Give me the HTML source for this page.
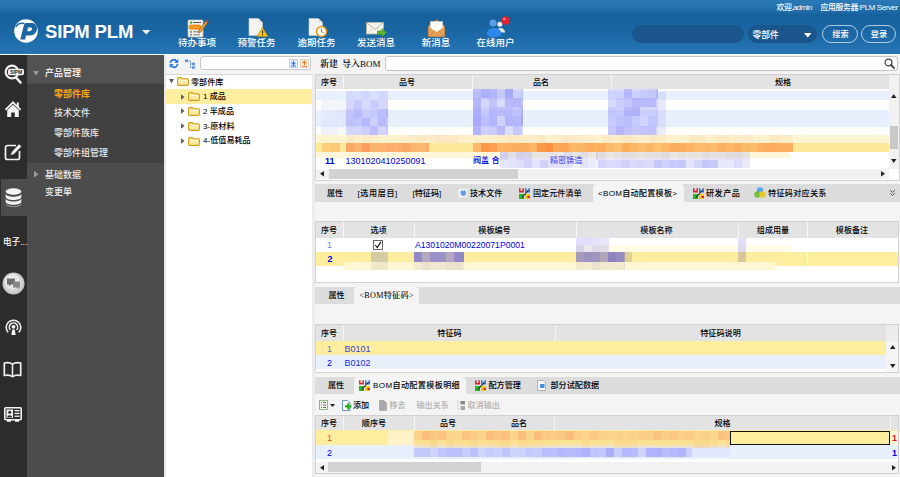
<!DOCTYPE html>
<html><head><meta charset="utf-8"><title>SIPM PLM</title>
<style>
*{margin:0;padding:0;box-sizing:border-box}
html,body{width:900px;height:477px;overflow:hidden;background:#f4f4f4;font-family:"Liberation Sans","Noto Sans CJK SC",sans-serif;font-size:9px;color:#000;font-weight:500}
.a{position:absolute}
.t{white-space:nowrap;line-height:10px;height:10px}
.w{color:#fff}
.b{color:#0000e0}
.g{color:#b2b2b2}
.s{font-family:"Liberation Serif","Noto Serif CJK SC",serif;font-weight:600}
svg{position:absolute;overflow:visible}
</style></head><body>
<div class="a" style="left:0px;top:0px;width:900px;height:53.5px;background:linear-gradient(#2b7ab7 0,#1e6aa6 12px,#16609c 15px,#1a66a3 30px,#2674b4 53px);"></div>
<div class="a" style="left:0px;top:53.5px;width:900px;height:2px;background:#fff;"></div>
<svg style="left:13.5px;top:18.6px" width="24" height="24" viewBox="0 0 24 24"><circle cx="12" cy="12" r="11.8" fill="#fff"/><path fill-rule="evenodd" d="M6.3 20.6L9.2 8.8C9.8 5.8 10.5 4.1 12.5 4.1H17.5C21.3 4.1 23.2 6.4 23 9.8C22.7 13.8 19.8 16.5 15.8 16.5H12L11 20.6ZM14 8.6L13.3 12.2H15.3C17 12.2 17.9 11.3 18 10.1C18.1 9.1 17.5 8.6 16.2 8.6Z" fill="#1c66a4"/><path d="M1.7 8C3.5 4.8 7 3.8 10.5 4.5" stroke="#1c66a4" stroke-width="1.4" fill="none"/></svg>
<div class="a t w" style="left:45px;top:21px;font-size:18.5px;line-height:21px;height:21px;font-weight:bold;letter-spacing:-0.15px">SIPM PLM</div>
<svg style="left:142px;top:30px" width="9" height="5"><path d="M0 0h8.5l-4.25 4.5z" fill="#e8f0f8"/></svg>
<div class="a t w" style="left:97px;width:200px;text-align:center;top:38px;font-size:9.5px">待办事项</div>
<div class="a t w" style="left:156.5px;width:200px;text-align:center;top:38px;font-size:9.5px">预警任务</div>
<div class="a t w" style="left:216.5px;width:200px;text-align:center;top:38px;font-size:9.5px">逾期任务</div>
<div class="a t w" style="left:276px;width:200px;text-align:center;top:38px;font-size:9.5px">发送消息</div>
<div class="a t w" style="left:336px;width:200px;text-align:center;top:38px;font-size:9.5px">新消息</div>
<div class="a t w" style="left:395.5px;width:200px;text-align:center;top:38px;font-size:9.5px">在线用户</div>
<svg style="left:187px;top:19px" width="22" height="19" viewBox="0 0 22 19">
<rect x="1" y="1" width="15" height="17" rx="1" fill="#f4f4ee" stroke="#c9c9c0" stroke-width=".6"/>
<rect x="2" y="6" width="12" height="4.2" rx="1.5" fill="#f59a23" stroke="#d9700a" stroke-width=".6"/>
<rect x="6" y="3" width="8" height="1" fill="#555"/><rect x="3" y="2.6" width="2" height="2" fill="#3a3"/>
<rect x="6" y="12.3" width="7" height="1" fill="#777"/><rect x="3" y="11.8" width="2" height="2" fill="#999"/>
<rect x="6" y="15.3" width="7" height="1" fill="#777"/><rect x="3" y="14.8" width="2" height="2" fill="#999"/>
<path d="M19.5 1.2l1.8 1.6-7.2 10-2.6 1.2.5-2.8z" fill="#e8a23a" stroke="#8a4b10" stroke-width=".6"/><path d="M19.5 1.2l1.8 1.6-1 1.4-1.8-1.6z" fill="#d23a2a"/>
</svg>
<svg style="left:248px;top:18px" width="21" height="20" viewBox="0 0 21 20">
<path d="M1 .5h9.5l4 4V17.5H1z" fill="#f3f3f0" stroke="#c4c4c0" stroke-width=".7"/><path d="M10.5 .5v4h4z" fill="#dcdcd8"/>
<path d="M14.5 9.5l5.5 9h-11z" fill="#f4c21c" stroke="#b98a00" stroke-width=".7"/><rect x="14" y="12.5" width="1.1" height="3" fill="#3a2a00"/><rect x="14" y="16.1" width="1.1" height="1.1" fill="#3a2a00"/>
</svg>
<svg style="left:308px;top:18px" width="20" height="20" viewBox="0 0 20 20">
<path d="M1 .5h9.5l4 4V17.5H1z" fill="#f3f3f0" stroke="#c4c4c0" stroke-width=".7"/><path d="M10.5 .5v4h4z" fill="#dcdcd8"/>
<circle cx="13.5" cy="13.5" r="5" fill="#fbfbf5" stroke="#e39a1c" stroke-width="1.5"/><path d="M13.5 10.5v3.2l2.2 1" stroke="#a06a10" stroke-width=".9" fill="none"/>
</svg>
<svg style="left:366px;top:22px" width="21" height="15" viewBox="0 0 21 15">
<rect x=".5" y=".5" width="17" height="11.5" fill="#f7f5ec" stroke="#b9b4a0" stroke-width=".8"/><path d="M.8 .8l8.2 6.5 8.2-6.5" stroke="#a9a48e" stroke-width=".8" fill="none"/><path d="M.8 11.8l6-5.2M17.2 11.8l-6-5.2" stroke="#cfcab8" stroke-width=".6"/>
<path d="M11.5 9h4.5V6.5l4.5 4.2-4.5 4.2V12.4h-4.5z" fill="#5cb531" stroke="#3a8a17" stroke-width=".6"/>
</svg>
<svg style="left:428px;top:19px" width="17" height="18" viewBox="0 0 17 18">
<path d="M.5 7L8.5 .8 16.5 7V17.5H.5z" fill="#e9a85c" stroke="#b87830" stroke-width=".7"/>
<rect x="2.3" y="2.5" width="12.4" height="10" fill="#fbfaf5" stroke="#d8d4c8" stroke-width=".5"/>
<path d="M.5 7.5l8 6 8-6V17.5H.5z" fill="#e3a057"/><path d="M.5 17.5l6.5-6M16.5 17.5l-6.5-6" stroke="#c88642" stroke-width=".6"/>
</svg>
<svg style="left:487px;top:16px" width="25" height="21" viewBox="0 0 25 21">
<circle cx="12.8" cy="8.3" r="2.5" fill="#f1ede4"/><path d="M9.5 16.5c0-3 1.5-4.5 4-4.5s4.5 1.5 4.5 4.5z" fill="#ece6da"/>
<circle cx="6" cy="7" r="3.5" fill="#5a9fe8"/><path d="M-.2 18c0-3.8 2.8-6 7.2-6s7.4 2.2 7.4 6c0 1.8-3 2.9-7.4 2.9S-.2 19.8 -.2 18z" fill="#2a88ee"/>
<circle cx="18.6" cy="4.5" r="4.3" fill="#e0222c"/><circle cx="17.3" cy="3" r="1.3" fill="#f9858a"/>
</svg>
<div class="a t w" style="left:776.5px;top:2.5px;font-size:7.9px;letter-spacing:-0.5px">欢迎,admin</div>
<div class="a t w" style="left:820.5px;top:2.5px;font-size:7.9px;letter-spacing:-0.38px">应用服务器:PLM Server</div>
<div class="a" style="left:632px;top:25px;width:112px;height:18px;background:#1a568c;border-radius:9px"></div>
<div class="a" style="left:748px;top:25px;width:69px;height:18px;background:#1a568c;border-radius:9px"></div>
<div class="a t w" style="left:752.5px;top:29.5px;font-size:8.8px">零部件</div>
<svg style="left:804px;top:33px" width="8" height="5"><path d="M0 0h7.5l-3.75 4.5z" fill="#fff"/></svg>
<div class="a" style="left:822px;top:25px;width:36px;height:18px;background:transparent;border:1px solid rgba(255,255,255,.65);border-radius:9px"></div>
<div class="a" style="left:861px;top:25px;width:35px;height:18px;background:transparent;border:1px solid rgba(255,255,255,.65);border-radius:9px"></div>
<div class="a t w" style="left:740.5px;width:200px;text-align:center;top:29.5px;font-size:8.2px">搜索</div>
<div class="a t w" style="left:779px;width:200px;text-align:center;top:29.5px;font-size:8.2px">登录</div>
<div class="a" style="left:0px;top:55.2px;width:27.3px;height:422px;background:#2c2c2c;"></div>
<div class="a" style="left:27.3px;top:55.2px;width:136.7px;height:422px;background:#4c4c4c;"></div>
<div class="a" style="left:27.3px;top:55.2px;width:136.7px;height:28.3px;background:#525252;"></div>
<div class="a" style="left:27.3px;top:83.5px;width:136.7px;height:79.5px;background:#414141;"></div>
<div class="a" style="left:164px;top:55.2px;width:1.5px;height:422px;background:#e8e8e8;"></div>
<div class="a" style="left:1px;top:179px;width:26px;height:37px;background:#4c4c4c;"></div>
<svg style="left:33px;top:71px" width="6" height="5"><path d="M0 0h6l-3 4.5z" fill="#9a9a9a"/></svg>
<div class="a t w" style="left:45px;top:68px;font-size:9px">产品管理</div>
<div class="a t " style="left:54px;top:88.5px;font-size:9px;font-weight:bold;color:#f9a51a">零部件库</div>
<div class="a t w" style="left:54px;top:108px;font-size:9px;color:#e8e8e8">技术文件</div>
<div class="a t w" style="left:54px;top:127.5px;font-size:9px;color:#e8e8e8">零部件族库</div>
<div class="a t w" style="left:54px;top:147.5px;font-size:9px;color:#e8e8e8">零部件组管理</div>
<svg style="left:34px;top:171px" width="5" height="7"><path d="M0 0v6.5l4.5-3.25z" fill="#9a9a9a"/></svg>
<div class="a t w" style="left:45px;top:169.5px;font-size:9px;color:#e8e8e8">基础数据</div>
<div class="a t w" style="left:45px;top:186.5px;font-size:9px;color:#e8e8e8">变更单</div>
<svg style="left:3px;top:64px" width="22" height="19" viewBox="0 0 22 19">
<circle cx="9" cy="8" r="6.3" fill="none" stroke="#f2f2f2" stroke-width="2.2"/><path d="M13 13.5l4.5 5" stroke="#f2f2f2" stroke-width="2.6" stroke-linecap="round"/>
<rect x="5" y="4.8" width="16" height="6.4" rx="2" fill="#f2f2f2"/><text x="13" y="10" font-size="5" font-weight="bold" text-anchor="middle" fill="#2c2c2c" font-family="Liberation Sans,sans-serif">SIPM</text></svg>
<svg style="left:4px;top:100px" width="18" height="18" viewBox="0 0 18 18">
<path d="M9 1L.8 9.2l1.3 1.3L9 3.8l6.9 6.7 1.3-1.3L14.8 6.8V2.5h-2v2.4z" fill="#f2f2f2"/><path d="M3.2 10.3L9 4.8l5.8 5.5V17h-4v-4.5H7.2V17h-4z" fill="#f2f2f2"/></svg>
<svg style="left:4px;top:143px" width="19" height="18" viewBox="0 0 19 18">
<path d="M12 2.5H3.5a2 2 0 0 0-2 2v10a2 2 0 0 0 2 2h10a2 2 0 0 0 2-2V8" fill="none" stroke="#f2f2f2" stroke-width="1.7"/>
<path d="M15 1l2.5 2.5-7.5 7.8-3.6 1.3 1.2-3.7z" fill="#f2f2f2" stroke="#2c2c2c" stroke-width=".5"/></svg>
<svg style="left:5px;top:188px" width="17" height="19" viewBox="0 0 17 19">
<ellipse cx="8.5" cy="3.5" rx="7.8" ry="3.3" fill="#f4f4f4"/>
<path d="M.7 5.5c0 4.4 15.6 4.4 15.6 0v3.2c0 4.4-15.6 4.4-15.6 0z" fill="#f4f4f4"/>
<path d="M.7 10.3c0 4.4 15.6 4.4 15.6 0v3.2c0 4.4-15.6 4.4-15.6 0z" fill="#f4f4f4"/>
<path d="M.7 15.1c0 4.4 15.6 4.4 15.6 0v.4c0 4.4-15.6 4.4-15.6 0z" fill="#f4f4f4"/></svg>
<div class="a t w" style="left:3px;top:236.5px;font-size:8.6px">电子...</div>
<svg style="left:2px;top:272px" width="23" height="23" viewBox="0 0 23 23">
<circle cx="11.5" cy="11.5" r="11" fill="#c4c4c4"/><circle cx="11" cy="10.8" r="9.5" fill="#d6d6d6"/><circle cx="10.5" cy="9.8" r="7.5" fill="#e6e6e6"/><circle cx="10" cy="9" r="5" fill="#f0f0f0"/>
<path d="M5 6.5h8v6H9l-2 2v-2H5z" fill="#6e6e6e"/><path d="M11 9.5h7v6h-1.5v2l-2-2H11z" fill="#888"/></svg>
<svg style="left:5px;top:318px" width="17" height="18" viewBox="0 0 17 18">
<path d="M3.2 14.5A7.3 7.3 0 1 1 13.8 14.5" fill="none" stroke="#f2f2f2" stroke-width="1.6"/>
<path d="M5.4 12A4.2 4.2 0 1 1 11.6 12" fill="none" stroke="#f2f2f2" stroke-width="1.5"/>
<circle cx="8.5" cy="8.8" r="1.9" fill="#f2f2f2"/><path d="M6.3 17l1-5.5h2.4l1 5.5z" fill="#f2f2f2"/></svg>
<svg style="left:3px;top:361px" width="19" height="18" viewBox="0 0 19 18">
<path d="M9.5 3.2C7.5 1.6 4 1.3 1.3 2v12.5c2.7-.7 6.2-.4 8.2 1.2 2-1.6 5.5-1.9 8.2-1.2V2c-2.7-.7-6.2-.4-8.2 1.2z" fill="none" stroke="#f2f2f2" stroke-width="1.7" stroke-linejoin="round"/><path d="M9.5 3.2v12.5" stroke="#f2f2f2" stroke-width="1.5"/></svg>
<svg style="left:4px;top:407px" width="18" height="15" viewBox="0 0 18 15">
<rect x=".8" y=".8" width="16.4" height="12" rx="1" fill="none" stroke="#f2f2f2" stroke-width="1.6"/>
<rect x="2.5" y="2.5" width="6.5" height="8.5" fill="#f2f2f2"/><circle cx="5.7" cy="5.3" r="1.5" fill="#2c2c2c"/><path d="M3.3 10.5c0-3 4.8-3 4.8 0z" fill="#2c2c2c"/>
<rect x="10.5" y="3" width="5" height="1.3" fill="#f2f2f2"/><rect x="10.5" y="5.8" width="5" height="1.3" fill="#f2f2f2"/><rect x="10.5" y="8.6" width="5" height="1.3" fill="#f2f2f2"/>
<rect x="3" y="13" width="4" height="1.8" fill="#f2f2f2"/><rect x="11" y="13" width="4" height="1.8" fill="#f2f2f2"/></svg>
<div class="a" style="left:165.5px;top:55.2px;width:147px;height:18.5px;background:#f3f3f3;"></div>
<div class="a" style="left:165.5px;top:73.5px;width:146.5px;height:404px;background:#fff;border-top:1px solid #d8d8d8"></div>
<div class="a" style="left:312px;top:73.5px;width:3px;height:404px;background:#ececec;"></div>
<svg style="left:168px;top:58px" width="12" height="11" viewBox="0 0 12 11">
<path d="M1.5 5A4.3 4.3 0 0 1 9 2.3L10.3 1v4H6.3l1.5-1.5A2.6 2.6 0 0 0 3.3 5z" fill="#2f7ddb"/>
<path d="M10.5 6A4.3 4.3 0 0 1 3 8.7L1.7 10V6h4L4.2 7.5A2.6 2.6 0 0 0 8.7 6z" fill="#2f7ddb"/></svg>
<svg style="left:185px;top:59px" width="10" height="10" viewBox="0 0 10 10">
<path d="M3 2h2.5v6.5H8M5.5 5H8" stroke="#7aa0d0" stroke-width=".8" fill="none"/><rect x="0" y=".5" width="3" height="2.6" fill="#6b95d0"/><rect x="7" y="3.7" width="3" height="2.6" fill="#6b95d0"/><rect x="7" y="7.2" width="3" height="2.6" fill="#6b95d0"/></svg>
<div class="a" style="left:199.5px;top:56px;width:111.5px;height:14px;background:#fff;border:1px solid #c4c4c4;border-radius:3px"></div>
<svg style="left:289px;top:59px" width="9" height="9" viewBox="0 0 9 9"><rect x=".4" y=".4" width="8.2" height="8.2" fill="#eaf1fa" stroke="#9db4d0" stroke-width=".6"/><path d="M4.5 1.5v3.5M2.5 3.5l2 2.2 2-2.2M2 7h5" stroke="#2f7ddb" stroke-width="1.1" fill="none"/></svg>
<svg style="left:300px;top:59px" width="9" height="9" viewBox="0 0 9 9"><rect x=".4" y=".4" width="8.2" height="8.2" fill="#fbf1e6" stroke="#d0b89d" stroke-width=".6"/><path d="M4.5 6V2.5M2.5 4.2l2-2.2 2 2.2M2 7.2h5" stroke="#ee7a10" stroke-width="1.1" fill="none"/></svg>
<div class="a" style="left:165.5px;top:89px;width:146.5px;height:15px;background:#fdee9f;"></div>
<svg style="left:169px;top:79px" width="6" height="6"><path d="M0 0h5l-2.5 4.5z" fill="#606060"/></svg>
<svg style="left:177px;top:77.2px" width="12" height="9" viewBox="0 0 12 9"><path d="M.6 1.8C.6 1 1 .6 1.8 .6h2.5l1.2 1.2h4.7c.8 0 1.2.4 1.2 1.2v4.2c0 .8-.4 1.2-1.2 1.2H1.8C1 8.4 .6 8 .6 7.2z" fill="#fbe9a0" stroke="#cf9c18" stroke-width="1.1"/><path d="M1.6 3.6h8.8" stroke="#fff8d8" stroke-width="1"/></svg>
<div class="a t " style="left:191px;top:77.5px;font-size:8.1px">零部件库</div>
<svg style="left:180.5px;top:93.6px" width="5" height="7"><path d="M0 .3v5.4l3.6-2.7z" fill="#606060"/></svg>
<svg style="left:188px;top:92.2px" width="12" height="9" viewBox="0 0 12 9"><path d="M.6 1.8C.6 1 1 .6 1.8 .6h2.5l1.2 1.2h4.7c.8 0 1.2.4 1.2 1.2v4.2c0 .8-.4 1.2-1.2 1.2H1.8C1 8.4 .6 8 .6 7.2z" fill="#fbe9a0" stroke="#cf9c18" stroke-width="1.1"/><path d="M1.6 3.6h8.8" stroke="#fff8d8" stroke-width="1"/></svg>
<div class="a t " style="left:203px;top:92px;font-size:8.1px">1 成品</div>
<svg style="left:180.5px;top:108.4px" width="5" height="7"><path d="M0 .3v5.4l3.6-2.7z" fill="#606060"/></svg>
<svg style="left:188px;top:107px" width="12" height="9" viewBox="0 0 12 9"><path d="M.6 1.8C.6 1 1 .6 1.8 .6h2.5l1.2 1.2h4.7c.8 0 1.2.4 1.2 1.2v4.2c0 .8-.4 1.2-1.2 1.2H1.8C1 8.4 .6 8 .6 7.2z" fill="#fbe9a0" stroke="#cf9c18" stroke-width="1.1"/><path d="M1.6 3.6h8.8" stroke="#fff8d8" stroke-width="1"/></svg>
<div class="a t " style="left:203px;top:106.8px;font-size:8.1px">2 半成品</div>
<svg style="left:180.5px;top:123.2px" width="5" height="7"><path d="M0 .3v5.4l3.6-2.7z" fill="#606060"/></svg>
<svg style="left:188px;top:121.8px" width="12" height="9" viewBox="0 0 12 9"><path d="M.6 1.8C.6 1 1 .6 1.8 .6h2.5l1.2 1.2h4.7c.8 0 1.2.4 1.2 1.2v4.2c0 .8-.4 1.2-1.2 1.2H1.8C1 8.4 .6 8 .6 7.2z" fill="#fbe9a0" stroke="#cf9c18" stroke-width="1.1"/><path d="M1.6 3.6h8.8" stroke="#fff8d8" stroke-width="1"/></svg>
<div class="a t " style="left:203px;top:121.6px;font-size:8.1px">3-原材料</div>
<svg style="left:180.5px;top:138px" width="5" height="7"><path d="M0 .3v5.4l3.6-2.7z" fill="#606060"/></svg>
<svg style="left:188px;top:136.6px" width="12" height="9" viewBox="0 0 12 9"><path d="M.6 1.8C.6 1 1 .6 1.8 .6h2.5l1.2 1.2h4.7c.8 0 1.2.4 1.2 1.2v4.2c0 .8-.4 1.2-1.2 1.2H1.8C1 8.4 .6 8 .6 7.2z" fill="#fbe9a0" stroke="#cf9c18" stroke-width="1.1"/><path d="M1.6 3.6h8.8" stroke="#fff8d8" stroke-width="1"/></svg>
<div class="a t " style="left:203px;top:136.4px;font-size:8.1px">4-低值易耗品</div>
<div class="a" style="left:315px;top:55.2px;width:585px;height:18.5px;background:#f3f3f3;"></div>
<div class="a t s" style="left:320px;top:59px;font-size:9px">新建</div>
<div class="a t s" style="left:342px;top:59px;font-size:9px">导入<span style="font-weight:400">BOM</span></div>
<div class="a" style="left:384.5px;top:56px;width:513px;height:14.5px;background:#fff;border:1px solid #c4c4c4;border-radius:3px"></div>
<svg style="left:884px;top:58px" width="11" height="11" viewBox="0 0 11 11"><circle cx="4.5" cy="4.5" r="3.4" fill="none" stroke="#444" stroke-width="1.3"/><path d="M7 7l3 3" stroke="#444" stroke-width="1.8" stroke-linecap="round"/></svg>
<div class="a" style="left:314.5px;top:73.5px;width:585px;height:107px;background:#fff;border:1px solid #d2d2d2"></div>
<div class="a" style="left:315.5px;top:74.5px;width:573.5px;height:14.5px;background:#e3e3e3;"></div>
<div class="a" style="left:343px;top:74.5px;width:1px;height:14.5px;background:#f6f6f6;"></div>
<div class="a" style="left:472px;top:74.5px;width:1px;height:14.5px;background:#f6f6f6;"></div>
<div class="a" style="left:611px;top:74.5px;width:1px;height:14.5px;background:#f6f6f6;"></div>
<div class="a t " style="left:229px;width:200px;text-align:center;top:77.5px;font-size:8.1px">序号</div>
<div class="a t " style="left:307px;width:200px;text-align:center;top:77.5px;font-size:8.1px">品号</div>
<div class="a t " style="left:441px;width:200px;text-align:center;top:77.5px;font-size:8.1px">品名</div>
<div class="a t " style="left:683px;width:200px;text-align:center;top:77.5px;font-size:8.1px">规格</div>
<div class="a" style="left:315.5px;top:91px;width:573.5px;height:9px;background:#e8f0fd;"></div>
<div class="a" style="left:315.5px;top:110px;width:573.5px;height:17px;background:#e8f0fd;"></div>
<div class="a" style="left:315.5px;top:135px;width:573.5px;height:8px;background:#fdf4d2;"></div>
<div class="a" style="left:315.5px;top:143px;width:573.5px;height:9px;background:#fde99a;"></div>
<div class="a" style="left:315.5px;top:152px;width:474.5px;height:6px;background:#fff7dc;"></div>
<div class="a" style="left:345.5px;top:91px;width:8px;height:9px;background:rgba(170,170,250,0.31)"></div>
<div class="a" style="left:353.5px;top:91px;width:8px;height:9px;background:rgba(170,170,250,0.28)"></div>
<div class="a" style="left:361.5px;top:91px;width:8px;height:9px;background:rgba(170,170,250,0.38)"></div>
<div class="a" style="left:369.5px;top:91px;width:8px;height:9px;background:rgba(170,170,250,0.26)"></div>
<div class="a" style="left:377.5px;top:91px;width:8px;height:9px;background:rgba(170,170,250,0.36)"></div>
<div class="a" style="left:385.5px;top:91px;width:2px;height:9px;background:rgba(170,170,250,0.32)"></div>
<div class="a" style="left:345.5px;top:100px;width:8px;height:8.8px;background:rgba(170,170,250,0.47)"></div>
<div class="a" style="left:353.5px;top:100px;width:8px;height:8.8px;background:rgba(170,170,250,0.65)"></div>
<div class="a" style="left:361.5px;top:100px;width:8px;height:8.8px;background:rgba(170,170,250,0.46)"></div>
<div class="a" style="left:369.5px;top:100px;width:8px;height:8.8px;background:rgba(170,170,250,0.62)"></div>
<div class="a" style="left:377.5px;top:100px;width:8px;height:8.8px;background:rgba(170,170,250,0.48)"></div>
<div class="a" style="left:385.5px;top:100px;width:2px;height:8.8px;background:rgba(170,170,250,0.49)"></div>
<div class="a" style="left:345.5px;top:108.8px;width:8px;height:8.8px;background:rgba(170,170,250,0.62)"></div>
<div class="a" style="left:353.5px;top:108.8px;width:8px;height:8.8px;background:rgba(170,170,250,0.78)"></div>
<div class="a" style="left:361.5px;top:108.8px;width:8px;height:8.8px;background:rgba(170,170,250,0.5)"></div>
<div class="a" style="left:369.5px;top:108.8px;width:8px;height:8.8px;background:rgba(170,170,250,0.54)"></div>
<div class="a" style="left:377.5px;top:108.8px;width:8px;height:8.8px;background:rgba(170,170,250,0.7)"></div>
<div class="a" style="left:385.5px;top:108.8px;width:2px;height:8.8px;background:rgba(170,170,250,0.83)"></div>
<div class="a" style="left:345.5px;top:117.5px;width:8px;height:8.8px;background:rgba(170,170,250,0.68)"></div>
<div class="a" style="left:353.5px;top:117.5px;width:8px;height:8.8px;background:rgba(170,170,250,0.61)"></div>
<div class="a" style="left:361.5px;top:117.5px;width:8px;height:8.8px;background:rgba(170,170,250,0.84)"></div>
<div class="a" style="left:369.5px;top:117.5px;width:8px;height:8.8px;background:rgba(170,170,250,0.47)"></div>
<div class="a" style="left:377.5px;top:117.5px;width:8px;height:8.8px;background:rgba(170,170,250,0.79)"></div>
<div class="a" style="left:385.5px;top:117.5px;width:2px;height:8.8px;background:rgba(170,170,250,0.57)"></div>
<div class="a" style="left:345.5px;top:126.2px;width:8px;height:8.8px;background:rgba(170,170,250,0.51)"></div>
<div class="a" style="left:353.5px;top:126.2px;width:8px;height:8.8px;background:rgba(170,170,250,0.5)"></div>
<div class="a" style="left:361.5px;top:126.2px;width:8px;height:8.8px;background:rgba(170,170,250,0.57)"></div>
<div class="a" style="left:369.5px;top:126.2px;width:8px;height:8.8px;background:rgba(170,170,250,0.78)"></div>
<div class="a" style="left:377.5px;top:126.2px;width:8px;height:8.8px;background:rgba(170,170,250,0.52)"></div>
<div class="a" style="left:385.5px;top:126.2px;width:2px;height:8.8px;background:rgba(170,170,250,0.68)"></div>
<div class="a" style="left:321px;top:100px;width:8px;height:8.8px;background:rgba(200,200,250,0.23)"></div>
<div class="a" style="left:329px;top:100px;width:8px;height:8.8px;background:rgba(200,200,250,0.17)"></div>
<div class="a" style="left:337px;top:100px;width:8px;height:8.8px;background:rgba(200,200,250,0.21)"></div>
<div class="a" style="left:345px;top:100px;width:0.5px;height:8.8px;background:rgba(200,200,250,0.11)"></div>
<div class="a" style="left:321px;top:108.8px;width:8px;height:8.8px;background:rgba(200,200,250,0.11)"></div>
<div class="a" style="left:329px;top:108.8px;width:8px;height:8.8px;background:rgba(200,200,250,0.14)"></div>
<div class="a" style="left:337px;top:108.8px;width:8px;height:8.8px;background:rgba(200,200,250,0.24)"></div>
<div class="a" style="left:345px;top:108.8px;width:0.5px;height:8.8px;background:rgba(200,200,250,0.19)"></div>
<div class="a" style="left:321px;top:117.5px;width:8px;height:8.8px;background:rgba(200,200,250,0.16)"></div>
<div class="a" style="left:329px;top:117.5px;width:8px;height:8.8px;background:rgba(200,200,250,0.22)"></div>
<div class="a" style="left:337px;top:117.5px;width:8px;height:8.8px;background:rgba(200,200,250,0.19)"></div>
<div class="a" style="left:345px;top:117.5px;width:0.5px;height:8.8px;background:rgba(200,200,250,0.16)"></div>
<div class="a" style="left:321px;top:126.2px;width:8px;height:8.8px;background:rgba(200,200,250,0.26)"></div>
<div class="a" style="left:329px;top:126.2px;width:8px;height:8.8px;background:rgba(200,200,250,0.24)"></div>
<div class="a" style="left:337px;top:126.2px;width:8px;height:8.8px;background:rgba(200,200,250,0.15)"></div>
<div class="a" style="left:345px;top:126.2px;width:0.5px;height:8.8px;background:rgba(200,200,250,0.21)"></div>
<div class="a" style="left:473px;top:88.5px;width:8px;height:9.3px;background:rgba(160,160,250,0.64)"></div>
<div class="a" style="left:481px;top:88.5px;width:8px;height:9.3px;background:rgba(160,160,250,0.83)"></div>
<div class="a" style="left:489px;top:88.5px;width:8px;height:9.3px;background:rgba(160,160,250,0.75)"></div>
<div class="a" style="left:497px;top:88.5px;width:8px;height:9.3px;background:rgba(160,160,250,0.51)"></div>
<div class="a" style="left:505px;top:88.5px;width:8px;height:9.3px;background:rgba(160,160,250,0.89)"></div>
<div class="a" style="left:513px;top:88.5px;width:8px;height:9.3px;background:rgba(160,160,250,0.41)"></div>
<div class="a" style="left:521px;top:88.5px;width:2px;height:9.3px;background:rgba(160,160,250,0.58)"></div>
<div class="a" style="left:473px;top:97.8px;width:8px;height:9.3px;background:rgba(160,160,250,0.77)"></div>
<div class="a" style="left:481px;top:97.8px;width:8px;height:9.3px;background:rgba(160,160,250,0.43)"></div>
<div class="a" style="left:489px;top:97.8px;width:8px;height:9.3px;background:rgba(160,160,250,0.62)"></div>
<div class="a" style="left:497px;top:97.8px;width:8px;height:9.3px;background:rgba(160,160,250,0.37)"></div>
<div class="a" style="left:505px;top:97.8px;width:8px;height:9.3px;background:rgba(160,160,250,0.72)"></div>
<div class="a" style="left:513px;top:97.8px;width:8px;height:9.3px;background:rgba(160,160,250,0.77)"></div>
<div class="a" style="left:521px;top:97.8px;width:2px;height:9.3px;background:rgba(160,160,250,0.67)"></div>
<div class="a" style="left:473px;top:107.1px;width:8px;height:9.3px;background:rgba(160,160,250,0.83)"></div>
<div class="a" style="left:481px;top:107.1px;width:8px;height:9.3px;background:rgba(160,160,250,0.52)"></div>
<div class="a" style="left:489px;top:107.1px;width:8px;height:9.3px;background:rgba(160,160,250,0.73)"></div>
<div class="a" style="left:497px;top:107.1px;width:8px;height:9.3px;background:rgba(160,160,250,0.68)"></div>
<div class="a" style="left:505px;top:107.1px;width:8px;height:9.3px;background:rgba(160,160,250,0.67)"></div>
<div class="a" style="left:513px;top:107.1px;width:8px;height:9.3px;background:rgba(160,160,250,0.6)"></div>
<div class="a" style="left:521px;top:107.1px;width:2px;height:9.3px;background:rgba(160,160,250,0.81)"></div>
<div class="a" style="left:473px;top:116.4px;width:8px;height:9.3px;background:rgba(160,160,250,0.87)"></div>
<div class="a" style="left:481px;top:116.4px;width:8px;height:9.3px;background:rgba(160,160,250,0.61)"></div>
<div class="a" style="left:489px;top:116.4px;width:8px;height:9.3px;background:rgba(160,160,250,0.72)"></div>
<div class="a" style="left:497px;top:116.4px;width:8px;height:9.3px;background:rgba(160,160,250,0.38)"></div>
<div class="a" style="left:505px;top:116.4px;width:8px;height:9.3px;background:rgba(160,160,250,0.74)"></div>
<div class="a" style="left:513px;top:116.4px;width:8px;height:9.3px;background:rgba(160,160,250,0.71)"></div>
<div class="a" style="left:521px;top:116.4px;width:2px;height:9.3px;background:rgba(160,160,250,0.9)"></div>
<div class="a" style="left:473px;top:125.7px;width:8px;height:9.3px;background:rgba(160,160,250,0.8)"></div>
<div class="a" style="left:481px;top:125.7px;width:8px;height:9.3px;background:rgba(160,160,250,0.51)"></div>
<div class="a" style="left:489px;top:125.7px;width:8px;height:9.3px;background:rgba(160,160,250,0.56)"></div>
<div class="a" style="left:497px;top:125.7px;width:8px;height:9.3px;background:rgba(160,160,250,0.72)"></div>
<div class="a" style="left:505px;top:125.7px;width:8px;height:9.3px;background:rgba(160,160,250,0.36)"></div>
<div class="a" style="left:513px;top:125.7px;width:8px;height:9.3px;background:rgba(160,160,250,0.6)"></div>
<div class="a" style="left:521px;top:125.7px;width:2px;height:9.3px;background:rgba(160,160,250,0.44)"></div>
<div class="a" style="left:608px;top:88.5px;width:8px;height:9.3px;background:rgba(160,160,250,0.4)"></div>
<div class="a" style="left:616px;top:88.5px;width:8px;height:9.3px;background:rgba(160,160,250,0.38)"></div>
<div class="a" style="left:624px;top:88.5px;width:8px;height:9.3px;background:rgba(160,160,250,0.7)"></div>
<div class="a" style="left:632px;top:88.5px;width:8px;height:9.3px;background:rgba(160,160,250,0.41)"></div>
<div class="a" style="left:640px;top:88.5px;width:8px;height:9.3px;background:rgba(160,160,250,0.46)"></div>
<div class="a" style="left:648px;top:88.5px;width:8px;height:9.3px;background:rgba(160,160,250,0.53)"></div>
<div class="a" style="left:656px;top:88.5px;width:2px;height:9.3px;background:rgba(160,160,250,0.74)"></div>
<div class="a" style="left:608px;top:97.8px;width:8px;height:9.3px;background:rgba(160,160,250,0.39)"></div>
<div class="a" style="left:616px;top:97.8px;width:8px;height:9.3px;background:rgba(160,160,250,0.55)"></div>
<div class="a" style="left:624px;top:97.8px;width:8px;height:9.3px;background:rgba(160,160,250,0.6)"></div>
<div class="a" style="left:632px;top:97.8px;width:8px;height:9.3px;background:rgba(160,160,250,0.75)"></div>
<div class="a" style="left:640px;top:97.8px;width:8px;height:9.3px;background:rgba(160,160,250,0.72)"></div>
<div class="a" style="left:648px;top:97.8px;width:8px;height:9.3px;background:rgba(160,160,250,0.74)"></div>
<div class="a" style="left:656px;top:97.8px;width:2px;height:9.3px;background:rgba(160,160,250,0.48)"></div>
<div class="a" style="left:608px;top:107.1px;width:8px;height:9.3px;background:rgba(160,160,250,0.54)"></div>
<div class="a" style="left:616px;top:107.1px;width:8px;height:9.3px;background:rgba(160,160,250,0.51)"></div>
<div class="a" style="left:624px;top:107.1px;width:8px;height:9.3px;background:rgba(160,160,250,0.75)"></div>
<div class="a" style="left:632px;top:107.1px;width:8px;height:9.3px;background:rgba(160,160,250,0.78)"></div>
<div class="a" style="left:640px;top:107.1px;width:8px;height:9.3px;background:rgba(160,160,250,0.42)"></div>
<div class="a" style="left:648px;top:107.1px;width:8px;height:9.3px;background:rgba(160,160,250,0.43)"></div>
<div class="a" style="left:656px;top:107.1px;width:2px;height:9.3px;background:rgba(160,160,250,0.45)"></div>
<div class="a" style="left:608px;top:116.4px;width:8px;height:9.3px;background:rgba(160,160,250,0.46)"></div>
<div class="a" style="left:616px;top:116.4px;width:8px;height:9.3px;background:rgba(160,160,250,0.57)"></div>
<div class="a" style="left:624px;top:116.4px;width:8px;height:9.3px;background:rgba(160,160,250,0.62)"></div>
<div class="a" style="left:632px;top:116.4px;width:8px;height:9.3px;background:rgba(160,160,250,0.47)"></div>
<div class="a" style="left:640px;top:116.4px;width:8px;height:9.3px;background:rgba(160,160,250,0.35)"></div>
<div class="a" style="left:648px;top:116.4px;width:8px;height:9.3px;background:rgba(160,160,250,0.54)"></div>
<div class="a" style="left:656px;top:116.4px;width:2px;height:9.3px;background:rgba(160,160,250,0.52)"></div>
<div class="a" style="left:608px;top:125.7px;width:8px;height:9.3px;background:rgba(160,160,250,0.6)"></div>
<div class="a" style="left:616px;top:125.7px;width:8px;height:9.3px;background:rgba(160,160,250,0.78)"></div>
<div class="a" style="left:624px;top:125.7px;width:8px;height:9.3px;background:rgba(160,160,250,0.66)"></div>
<div class="a" style="left:632px;top:125.7px;width:8px;height:9.3px;background:rgba(160,160,250,0.58)"></div>
<div class="a" style="left:640px;top:125.7px;width:8px;height:9.3px;background:rgba(160,160,250,0.63)"></div>
<div class="a" style="left:648px;top:125.7px;width:8px;height:9.3px;background:rgba(160,160,250,0.65)"></div>
<div class="a" style="left:656px;top:125.7px;width:2px;height:9.3px;background:rgba(160,160,250,0.37)"></div>
<div class="a" style="left:658px;top:91.5px;width:8px;height:9.3px;background:rgba(190,190,250,0.38)"></div>
<div class="a" style="left:658px;top:100.8px;width:8px;height:9.3px;background:rgba(190,190,250,0.36)"></div>
<div class="a" style="left:658px;top:110.1px;width:8px;height:9.3px;background:rgba(190,190,250,0.37)"></div>
<div class="a" style="left:658px;top:119.4px;width:8px;height:9.3px;background:rgba(190,190,250,0.36)"></div>
<div class="a" style="left:658px;top:128.7px;width:8px;height:6.3px;background:rgba(190,190,250,0.28)"></div>
<div class="a" style="left:345.5px;top:143px;width:8px;height:9px;background:rgba(250,140,80,0.71)"></div>
<div class="a" style="left:353.5px;top:143px;width:8px;height:9px;background:rgba(250,140,80,0.59)"></div>
<div class="a" style="left:361.5px;top:143px;width:8px;height:9px;background:rgba(250,140,80,0.8)"></div>
<div class="a" style="left:369.5px;top:143px;width:8px;height:9px;background:rgba(250,140,80,0.57)"></div>
<div class="a" style="left:377.5px;top:143px;width:8px;height:9px;background:rgba(250,140,80,0.58)"></div>
<div class="a" style="left:385.5px;top:143px;width:8px;height:9px;background:rgba(250,140,80,0.63)"></div>
<div class="a" style="left:393.5px;top:143px;width:8px;height:9px;background:rgba(250,140,80,0.61)"></div>
<div class="a" style="left:401.5px;top:143px;width:8px;height:9px;background:rgba(250,140,80,0.69)"></div>
<div class="a" style="left:409.5px;top:143px;width:8px;height:9px;background:rgba(250,140,80,0.57)"></div>
<div class="a" style="left:417.5px;top:143px;width:8px;height:9px;background:rgba(250,140,80,0.55)"></div>
<div class="a" style="left:425.5px;top:143px;width:3.5px;height:9px;background:rgba(250,140,80,0.61)"></div>
<div class="a" style="left:322px;top:143px;width:9px;height:9px;background:rgba(250,160,80,0.38)"></div>
<div class="a" style="left:331px;top:143px;width:9px;height:9px;background:rgba(250,160,80,0.44)"></div>
<div class="a" style="left:473px;top:143px;width:8px;height:9px;background:rgba(250,140,60,0.51)"></div>
<div class="a" style="left:481px;top:143px;width:8px;height:9px;background:rgba(250,140,60,0.89)"></div>
<div class="a" style="left:489px;top:143px;width:8px;height:9px;background:rgba(250,140,60,0.78)"></div>
<div class="a" style="left:497px;top:143px;width:8px;height:9px;background:rgba(250,140,60,0.57)"></div>
<div class="a" style="left:505px;top:143px;width:8px;height:9px;background:rgba(250,140,60,0.61)"></div>
<div class="a" style="left:513px;top:143px;width:8px;height:9px;background:rgba(250,140,60,0.66)"></div>
<div class="a" style="left:521px;top:143px;width:8px;height:9px;background:rgba(250,140,60,0.66)"></div>
<div class="a" style="left:529px;top:143px;width:8px;height:9px;background:rgba(250,140,60,0.56)"></div>
<div class="a" style="left:537px;top:143px;width:8px;height:9px;background:rgba(250,140,60,0.88)"></div>
<div class="a" style="left:545px;top:143px;width:8px;height:9px;background:rgba(250,140,60,0.95)"></div>
<div class="a" style="left:553px;top:143px;width:8px;height:9px;background:rgba(250,140,60,0.71)"></div>
<div class="a" style="left:561px;top:143px;width:8px;height:9px;background:rgba(250,140,60,0.72)"></div>
<div class="a" style="left:569px;top:143px;width:8px;height:9px;background:rgba(250,140,60,0.54)"></div>
<div class="a" style="left:577px;top:143px;width:8px;height:9px;background:rgba(250,140,60,0.55)"></div>
<div class="a" style="left:585px;top:143px;width:8px;height:9px;background:rgba(250,140,60,0.65)"></div>
<div class="a" style="left:593px;top:143px;width:5px;height:9px;background:rgba(250,140,60,0.62)"></div>
<div class="a" style="left:598px;top:143px;width:8px;height:9px;background:rgba(250,160,80,0.8)"></div>
<div class="a" style="left:606px;top:143px;width:8px;height:9px;background:rgba(250,160,80,0.6)"></div>
<div class="a" style="left:614px;top:143px;width:8px;height:9px;background:rgba(250,160,80,0.56)"></div>
<div class="a" style="left:622px;top:143px;width:8px;height:9px;background:rgba(250,160,80,0.84)"></div>
<div class="a" style="left:630px;top:143px;width:8px;height:9px;background:rgba(250,160,80,0.71)"></div>
<div class="a" style="left:638px;top:143px;width:8px;height:9px;background:rgba(250,160,80,0.59)"></div>
<div class="a" style="left:646px;top:143px;width:8px;height:9px;background:rgba(250,160,80,0.71)"></div>
<div class="a" style="left:654px;top:143px;width:8px;height:9px;background:rgba(250,160,80,0.56)"></div>
<div class="a" style="left:662px;top:143px;width:8px;height:9px;background:rgba(250,160,80,0.71)"></div>
<div class="a" style="left:670px;top:143px;width:8px;height:9px;background:rgba(250,160,80,0.84)"></div>
<div class="a" style="left:678px;top:143px;width:8px;height:9px;background:rgba(250,160,80,0.81)"></div>
<div class="a" style="left:686px;top:143px;width:8px;height:9px;background:rgba(250,160,80,0.76)"></div>
<div class="a" style="left:694px;top:143px;width:8px;height:9px;background:rgba(250,160,80,0.63)"></div>
<div class="a" style="left:702px;top:143px;width:8px;height:9px;background:rgba(250,160,80,0.66)"></div>
<div class="a" style="left:710px;top:143px;width:8px;height:9px;background:rgba(250,160,80,0.6)"></div>
<div class="a" style="left:718px;top:143px;width:8px;height:9px;background:rgba(250,160,80,0.78)"></div>
<div class="a" style="left:726px;top:143px;width:8px;height:9px;background:rgba(250,160,80,0.71)"></div>
<div class="a" style="left:734px;top:143px;width:8px;height:9px;background:rgba(250,160,80,0.78)"></div>
<div class="a" style="left:742px;top:143px;width:8px;height:9px;background:rgba(250,160,80,0.65)"></div>
<div class="a" style="left:750px;top:143px;width:8px;height:9px;background:rgba(250,160,80,0.62)"></div>
<div class="a" style="left:758px;top:143px;width:8px;height:9px;background:rgba(250,160,80,0.79)"></div>
<div class="a" style="left:766px;top:143px;width:8px;height:9px;background:rgba(250,160,80,0.85)"></div>
<div class="a" style="left:774px;top:143px;width:8px;height:9px;background:rgba(250,160,80,0.81)"></div>
<div class="a" style="left:782px;top:143px;width:8px;height:9px;background:rgba(250,160,80,0.79)"></div>
<div class="a" style="left:790px;top:143px;width:3px;height:9px;background:rgba(250,160,80,0.8)"></div>
<div class="a" style="left:345.5px;top:135px;width:8px;height:8px;background:rgba(250,200,150,0.2)"></div>
<div class="a" style="left:353.5px;top:135px;width:8px;height:8px;background:rgba(250,200,150,0.1)"></div>
<div class="a" style="left:361.5px;top:135px;width:8px;height:8px;background:rgba(250,200,150,0.15)"></div>
<div class="a" style="left:369.5px;top:135px;width:8px;height:8px;background:rgba(250,200,150,0.12)"></div>
<div class="a" style="left:377.5px;top:135px;width:8px;height:8px;background:rgba(250,200,150,0.06)"></div>
<div class="a" style="left:385.5px;top:135px;width:8px;height:8px;background:rgba(250,200,150,0.06)"></div>
<div class="a" style="left:393.5px;top:135px;width:8px;height:8px;background:rgba(250,200,150,0.11)"></div>
<div class="a" style="left:401.5px;top:135px;width:8px;height:8px;background:rgba(250,200,150,0.1)"></div>
<div class="a" style="left:409.5px;top:135px;width:8px;height:8px;background:rgba(250,200,150,0.19)"></div>
<div class="a" style="left:417.5px;top:135px;width:8px;height:8px;background:rgba(250,200,150,0.24)"></div>
<div class="a" style="left:425.5px;top:135px;width:8px;height:8px;background:rgba(250,200,150,0.14)"></div>
<div class="a" style="left:433.5px;top:135px;width:8px;height:8px;background:rgba(250,200,150,0.24)"></div>
<div class="a" style="left:441.5px;top:135px;width:8px;height:8px;background:rgba(250,200,150,0.25)"></div>
<div class="a" style="left:449.5px;top:135px;width:8px;height:8px;background:rgba(250,200,150,0.24)"></div>
<div class="a" style="left:457.5px;top:135px;width:8px;height:8px;background:rgba(250,200,150,0.12)"></div>
<div class="a" style="left:465.5px;top:135px;width:8px;height:8px;background:rgba(250,200,150,0.09)"></div>
<div class="a" style="left:473.5px;top:135px;width:8px;height:8px;background:rgba(250,200,150,0.1)"></div>
<div class="a" style="left:481.5px;top:135px;width:8px;height:8px;background:rgba(250,200,150,0.09)"></div>
<div class="a" style="left:489.5px;top:135px;width:8px;height:8px;background:rgba(250,200,150,0.09)"></div>
<div class="a" style="left:497.5px;top:135px;width:8px;height:8px;background:rgba(250,200,150,0.17)"></div>
<div class="a" style="left:505.5px;top:135px;width:8px;height:8px;background:rgba(250,200,150,0.23)"></div>
<div class="a" style="left:513.5px;top:135px;width:8px;height:8px;background:rgba(250,200,150,0.22)"></div>
<div class="a" style="left:521.5px;top:135px;width:8px;height:8px;background:rgba(250,200,150,0.15)"></div>
<div class="a" style="left:529.5px;top:135px;width:8px;height:8px;background:rgba(250,200,150,0.18)"></div>
<div class="a" style="left:537.5px;top:135px;width:8px;height:8px;background:rgba(250,200,150,0.21)"></div>
<div class="a" style="left:545.5px;top:135px;width:8px;height:8px;background:rgba(250,200,150,0.07)"></div>
<div class="a" style="left:553.5px;top:135px;width:8px;height:8px;background:rgba(250,200,150,0.18)"></div>
<div class="a" style="left:561.5px;top:135px;width:8px;height:8px;background:rgba(250,200,150,0.23)"></div>
<div class="a" style="left:569.5px;top:135px;width:8px;height:8px;background:rgba(250,200,150,0.21)"></div>
<div class="a" style="left:577.5px;top:135px;width:8px;height:8px;background:rgba(250,200,150,0.2)"></div>
<div class="a" style="left:585.5px;top:135px;width:8px;height:8px;background:rgba(250,200,150,0.15)"></div>
<div class="a" style="left:593.5px;top:135px;width:8px;height:8px;background:rgba(250,200,150,0.09)"></div>
<div class="a" style="left:601.5px;top:135px;width:8px;height:8px;background:rgba(250,200,150,0.21)"></div>
<div class="a" style="left:609.5px;top:135px;width:8px;height:8px;background:rgba(250,200,150,0.12)"></div>
<div class="a" style="left:617.5px;top:135px;width:8px;height:8px;background:rgba(250,200,150,0.21)"></div>
<div class="a" style="left:625.5px;top:135px;width:8px;height:8px;background:rgba(250,200,150,0.24)"></div>
<div class="a" style="left:633.5px;top:135px;width:8px;height:8px;background:rgba(250,200,150,0.13)"></div>
<div class="a" style="left:641.5px;top:135px;width:8px;height:8px;background:rgba(250,200,150,0.13)"></div>
<div class="a" style="left:649.5px;top:135px;width:8px;height:8px;background:rgba(250,200,150,0.24)"></div>
<div class="a" style="left:657.5px;top:135px;width:8px;height:8px;background:rgba(250,200,150,0.19)"></div>
<div class="a" style="left:665.5px;top:135px;width:8px;height:8px;background:rgba(250,200,150,0.08)"></div>
<div class="a" style="left:673.5px;top:135px;width:8px;height:8px;background:rgba(250,200,150,0.08)"></div>
<div class="a" style="left:681.5px;top:135px;width:8px;height:8px;background:rgba(250,200,150,0.08)"></div>
<div class="a" style="left:689.5px;top:135px;width:8px;height:8px;background:rgba(250,200,150,0.23)"></div>
<div class="a" style="left:697.5px;top:135px;width:8px;height:8px;background:rgba(250,200,150,0.21)"></div>
<div class="a" style="left:705.5px;top:135px;width:8px;height:8px;background:rgba(250,200,150,0.08)"></div>
<div class="a" style="left:713.5px;top:135px;width:8px;height:8px;background:rgba(250,200,150,0.22)"></div>
<div class="a" style="left:721.5px;top:135px;width:8px;height:8px;background:rgba(250,200,150,0.25)"></div>
<div class="a" style="left:729.5px;top:135px;width:8px;height:8px;background:rgba(250,200,150,0.18)"></div>
<div class="a" style="left:737.5px;top:135px;width:8px;height:8px;background:rgba(250,200,150,0.12)"></div>
<div class="a" style="left:745.5px;top:135px;width:8px;height:8px;background:rgba(250,200,150,0.16)"></div>
<div class="a" style="left:753.5px;top:135px;width:8px;height:8px;background:rgba(250,200,150,0.08)"></div>
<div class="a" style="left:761.5px;top:135px;width:8px;height:8px;background:rgba(250,200,150,0.05)"></div>
<div class="a" style="left:769.5px;top:135px;width:8px;height:8px;background:rgba(250,200,150,0.24)"></div>
<div class="a" style="left:777.5px;top:135px;width:8px;height:8px;background:rgba(250,200,150,0.18)"></div>
<div class="a" style="left:785.5px;top:135px;width:7.5px;height:8px;background:rgba(250,200,150,0.16)"></div>
<div class="a" style="left:500px;top:152px;width:8px;height:8px;background:rgba(170,170,245,0.52)"></div>
<div class="a" style="left:508px;top:152px;width:8px;height:8px;background:rgba(170,170,245,0.32)"></div>
<div class="a" style="left:516px;top:152px;width:8px;height:8px;background:rgba(170,170,245,0.5)"></div>
<div class="a" style="left:524px;top:152px;width:8px;height:8px;background:rgba(170,170,245,0.48)"></div>
<div class="a" style="left:532px;top:152px;width:8px;height:8px;background:rgba(170,170,245,0.23)"></div>
<div class="a" style="left:540px;top:152px;width:8px;height:8px;background:rgba(170,170,245,0.25)"></div>
<div class="a" style="left:548px;top:152px;width:8px;height:8px;background:rgba(170,170,245,0.27)"></div>
<div class="a" style="left:556px;top:152px;width:8px;height:8px;background:rgba(170,170,245,0.25)"></div>
<div class="a" style="left:564px;top:152px;width:8px;height:8px;background:rgba(170,170,245,0.38)"></div>
<div class="a" style="left:572px;top:152px;width:8px;height:8px;background:rgba(170,170,245,0.25)"></div>
<div class="a" style="left:580px;top:152px;width:8px;height:8px;background:rgba(170,170,245,0.32)"></div>
<div class="a" style="left:588px;top:152px;width:8px;height:8px;background:rgba(170,170,245,0.2)"></div>
<div class="a" style="left:596px;top:152px;width:2px;height:8px;background:rgba(170,170,245,0.51)"></div>
<div class="a" style="left:500px;top:160px;width:8px;height:8px;background:rgba(170,170,245,0.29)"></div>
<div class="a" style="left:508px;top:160px;width:8px;height:8px;background:rgba(170,170,245,0.33)"></div>
<div class="a" style="left:516px;top:160px;width:8px;height:8px;background:rgba(170,170,245,0.38)"></div>
<div class="a" style="left:524px;top:160px;width:8px;height:8px;background:rgba(170,170,245,0.51)"></div>
<div class="a" style="left:532px;top:160px;width:8px;height:8px;background:rgba(170,170,245,0.32)"></div>
<div class="a" style="left:540px;top:160px;width:8px;height:8px;background:rgba(170,170,245,0.52)"></div>
<div class="a" style="left:548px;top:160px;width:8px;height:8px;background:rgba(170,170,245,0.35)"></div>
<div class="a" style="left:556px;top:160px;width:8px;height:8px;background:rgba(170,170,245,0.36)"></div>
<div class="a" style="left:564px;top:160px;width:8px;height:8px;background:rgba(170,170,245,0.36)"></div>
<div class="a" style="left:572px;top:160px;width:8px;height:8px;background:rgba(170,170,245,0.16)"></div>
<div class="a" style="left:580px;top:160px;width:8px;height:8px;background:rgba(170,170,245,0.33)"></div>
<div class="a" style="left:588px;top:160px;width:8px;height:8px;background:rgba(170,170,245,0.22)"></div>
<div class="a" style="left:596px;top:160px;width:2px;height:8px;background:rgba(170,170,245,0.15)"></div>
<div class="a" style="left:598px;top:152px;width:8px;height:8px;background:rgba(190,185,230,0.45)"></div>
<div class="a" style="left:606px;top:152px;width:8px;height:8px;background:rgba(190,185,230,0.29)"></div>
<div class="a" style="left:614px;top:152px;width:8px;height:8px;background:rgba(190,185,230,0.37)"></div>
<div class="a" style="left:622px;top:152px;width:8px;height:8px;background:rgba(190,185,230,0.43)"></div>
<div class="a" style="left:630px;top:152px;width:8px;height:8px;background:rgba(190,185,230,0.39)"></div>
<div class="a" style="left:638px;top:152px;width:8px;height:8px;background:rgba(190,185,230,0.33)"></div>
<div class="a" style="left:646px;top:152px;width:8px;height:8px;background:rgba(190,185,230,0.38)"></div>
<div class="a" style="left:654px;top:152px;width:8px;height:8px;background:rgba(190,185,230,0.39)"></div>
<div class="a" style="left:662px;top:152px;width:8px;height:8px;background:rgba(190,185,230,0.45)"></div>
<div class="a" style="left:670px;top:152px;width:8px;height:8px;background:rgba(190,185,230,0.28)"></div>
<div class="a" style="left:678px;top:152px;width:8px;height:8px;background:rgba(190,185,230,0.39)"></div>
<div class="a" style="left:686px;top:152px;width:8px;height:8px;background:rgba(190,185,230,0.31)"></div>
<div class="a" style="left:694px;top:152px;width:8px;height:8px;background:rgba(190,185,230,0.32)"></div>
<div class="a" style="left:702px;top:152px;width:8px;height:8px;background:rgba(190,185,230,0.44)"></div>
<div class="a" style="left:710px;top:152px;width:8px;height:8px;background:rgba(190,185,230,0.38)"></div>
<div class="a" style="left:718px;top:152px;width:8px;height:8px;background:rgba(190,185,230,0.39)"></div>
<div class="a" style="left:726px;top:152px;width:8px;height:8px;background:rgba(190,185,230,0.44)"></div>
<div class="a" style="left:734px;top:152px;width:8px;height:8px;background:rgba(190,185,230,0.48)"></div>
<div class="a" style="left:742px;top:152px;width:8px;height:8px;background:rgba(190,185,230,0.36)"></div>
<div class="a" style="left:598px;top:160px;width:8px;height:8px;background:rgba(170,170,245,0.51)"></div>
<div class="a" style="left:606px;top:160px;width:8px;height:8px;background:rgba(170,170,245,0.45)"></div>
<div class="a" style="left:614px;top:160px;width:8px;height:8px;background:rgba(170,170,245,0.46)"></div>
<div class="a" style="left:622px;top:160px;width:8px;height:8px;background:rgba(170,170,245,0.55)"></div>
<div class="a" style="left:630px;top:160px;width:8px;height:8px;background:rgba(170,170,245,0.43)"></div>
<div class="a" style="left:638px;top:160px;width:8px;height:8px;background:rgba(170,170,245,0.47)"></div>
<div class="a" style="left:646px;top:160px;width:8px;height:8px;background:rgba(170,170,245,0.44)"></div>
<div class="a" style="left:654px;top:160px;width:8px;height:8px;background:rgba(170,170,245,0.67)"></div>
<div class="a" style="left:662px;top:160px;width:8px;height:8px;background:rgba(170,170,245,0.55)"></div>
<div class="a" style="left:670px;top:160px;width:8px;height:8px;background:rgba(170,170,245,0.64)"></div>
<div class="a" style="left:678px;top:160px;width:8px;height:8px;background:rgba(170,170,245,0.67)"></div>
<div class="a" style="left:686px;top:160px;width:8px;height:8px;background:rgba(170,170,245,0.33)"></div>
<div class="a" style="left:694px;top:160px;width:8px;height:8px;background:rgba(170,170,245,0.48)"></div>
<div class="a" style="left:702px;top:160px;width:8px;height:8px;background:rgba(170,170,245,0.67)"></div>
<div class="a" style="left:710px;top:160px;width:8px;height:8px;background:rgba(170,170,245,0.62)"></div>
<div class="a" style="left:718px;top:160px;width:8px;height:8px;background:rgba(170,170,245,0.27)"></div>
<div class="a" style="left:726px;top:160px;width:8px;height:8px;background:rgba(170,170,245,0.26)"></div>
<div class="a" style="left:734px;top:160px;width:8px;height:8px;background:rgba(170,170,245,0.42)"></div>
<div class="a" style="left:742px;top:160px;width:8px;height:8px;background:rgba(170,170,245,0.24)"></div>
<div class="a t b" style="left:325px;top:156px;font-size:9px;font-weight:bold">11</div>
<div class="a t b" style="left:345.5px;top:156px;font-size:9px">1301020410250091</div>
<div class="a t b" style="left:473px;top:156px;font-size:8.1px">阀盖 合</div>
<div class="a t b" style="left:550px;top:156px;font-size:8.1px;opacity:.6">精密铸造</div>
<div class="a" style="left:889px;top:74.5px;width:9.5px;height:94px;background:#f1f1f1;"></div>
<div class="a" style="left:889.5px;top:126px;width:8.5px;height:22.5px;background:#c9c9c9;"></div>
<svg style="left:891px;top:94px" width="6" height="4"><path d="M0 4h5.5l-2.75-4z" fill="#222"/></svg>
<svg style="left:891px;top:159px" width="6" height="4"><path d="M0 0h5.5l-2.75 4z" fill="#222"/></svg>
<div class="a" style="left:315.5px;top:168.5px;width:573.5px;height:10.5px;background:#f2f2f2;"></div>
<div class="a" style="left:328.5px;top:169px;width:189.5px;height:9.5px;background:#d2d2d2;"></div>
<svg style="left:319.5px;top:171px" width="4" height="6"><path d="M4 0v5.5l-4-2.75z" fill="#222"/></svg>
<svg style="left:881px;top:171px" width="4" height="6"><path d="M0 0v5.5l4-2.75z" fill="#222"/></svg>
<div class="a" style="left:315px;top:183.5px;width:585px;height:18px;background:#dcdcdc;"></div>
<div class="a t " style="left:327px;top:188.5px;font-size:8.1px">属性</div>
<div class="a t " style="left:357.5px;top:188.5px;font-size:8.1px;letter-spacing:.6px">[选用层目]</div>
<div class="a t " style="left:412.5px;top:188.5px;font-size:8.1px">[特征码]</div>
<svg style="left:458px;top:188px" width="10" height="10" viewBox="0 0 10 10"><rect x=".4" y=".4" width="9.2" height="9.2" fill="#f4f4f4" stroke="#e0e0e0" stroke-width=".6"/><path d="M3 3.5h4.5v3h-4.5zM4 2v1.5M6.5 2v1.5M3.5 7.5h3.5" fill="#5a9ae6" stroke="#5a9ae6" stroke-width=".8"/></svg>
<div class="a t " style="left:470px;top:188.5px;font-size:8.1px">技术文件</div>
<svg style="left:519px;top:188px" width="11" height="11" viewBox="0 0 11 11"><path d="M.8 .3v3.4h3.4V.3" fill="none" stroke="#e02030" stroke-width="1.5"/><path d="M6.8 .3v3.4h3.4V.3" fill="none" stroke="#2878e0" stroke-width="1.5"/><rect x="0" y="6" width="5" height="5" fill="#28b428"/><rect x="6" y="6" width="5" height="5" fill="#f0c818"/><rect x="8.5" y="8" width="2.5" height="2" fill="#e02030"/><path d="M3 9.5L9.5 2" stroke="#222" stroke-width="1.1"/></svg>
<div class="a t " style="left:533px;top:188.5px;font-size:8.1px">固定元件清单</div>
<div class="a" style="left:592.5px;top:183.5px;width:91px;height:18px;background:#f4f4f4;border-radius:4px 4px 0 0"></div>
<div class="a t " style="left:598px;top:188.5px;font-size:8.1px;letter-spacing:.25px">&lt;BOM自动配置模板&gt;</div>
<svg style="left:693px;top:188px" width="11" height="11" viewBox="0 0 11 11"><path d="M.8 .3v3.4h3.4V.3" fill="none" stroke="#e02030" stroke-width="1.5"/><path d="M6.8 .3v3.4h3.4V.3" fill="none" stroke="#2878e0" stroke-width="1.5"/><rect x="0" y="6" width="5" height="5" fill="#28b428"/><rect x="6" y="6" width="5" height="5" fill="#f0c818"/><rect x="8.5" y="8" width="2.5" height="2" fill="#e02030"/><path d="M3 9.5L9.5 2" stroke="#222" stroke-width="1.1"/></svg>
<div class="a t " style="left:706px;top:188.5px;font-size:8.1px;letter-spacing:.5px">研发产品</div>
<svg style="left:754px;top:187px" width="12" height="11" viewBox="0 0 12 11"><circle cx="6" cy="3.5" r="3.2" fill="#58a8e8"/><circle cx="3.5" cy="7.5" r="3.2" fill="#78c040"/><circle cx="8.5" cy="7.5" r="3.2" fill="#e8c830"/></svg>
<div class="a t " style="left:768px;top:188.5px;font-size:8.1px;letter-spacing:.3px">特征码对应关系</div>
<svg style="left:889.5px;top:189.5px" width="5" height="6" viewBox="0 0 5 6"><path d="M.3 .3l2.2 2 2.2-2M.3 3.3l2.2 2 2.2-2" stroke="#444" stroke-width=".9" fill="none"/></svg>
<div class="a" style="left:314.5px;top:220.5px;width:584px;height:62.5px;background:#fff;border:1px solid #d2d2d2"></div>
<div class="a" style="left:315.5px;top:221.5px;width:582px;height:16px;background:#e3e3e3;"></div>
<div class="a" style="left:343px;top:221.5px;width:1px;height:16px;background:#f6f6f6;"></div>
<div class="a" style="left:414px;top:221.5px;width:1px;height:16px;background:#f6f6f6;"></div>
<div class="a" style="left:575.5px;top:221.5px;width:1px;height:16px;background:#f6f6f6;"></div>
<div class="a" style="left:737.5px;top:221.5px;width:1px;height:16px;background:#f6f6f6;"></div>
<div class="a" style="left:807px;top:221.5px;width:1px;height:16px;background:#f6f6f6;"></div>
<div class="a t " style="left:229px;width:200px;text-align:center;top:225.5px;font-size:8.1px">序号</div>
<div class="a t " style="left:278.5px;width:200px;text-align:center;top:225.5px;font-size:8.1px">选项</div>
<div class="a t " style="left:394.5px;width:200px;text-align:center;top:225.5px;font-size:8.1px">模板编号</div>
<div class="a t " style="left:556.5px;width:200px;text-align:center;top:225.5px;font-size:8.1px">模板名称</div>
<div class="a t " style="left:673px;width:200px;text-align:center;top:225.5px;font-size:8.1px">组成用量</div>
<div class="a t " style="left:752px;width:200px;text-align:center;top:225.5px;font-size:8.1px">模板备注</div>
<div class="a" style="left:315.5px;top:252px;width:582px;height:14px;background:#fdee9f;"></div>
<div class="a" style="left:807px;top:252px;width:1px;height:14px;background:#fff;"></div>
<div class="a" style="left:343px;top:262px;width:432px;height:8px;background:#fff;"></div>
<div class="a" style="left:343px;top:262px;width:432px;height:8px;background:rgba(253,238,159,.45);"></div>
<div class="a" style="left:575.5px;top:245px;width:215px;height:7px;background:#fffbe6;"></div>
<div class="a t b" style="left:229.5px;width:200px;text-align:center;top:240px;font-size:9px;opacity:.55">1</div>
<div class="a t b" style="left:230px;width:200px;text-align:center;top:254px;font-size:9px;font-weight:bold">2</div>
<svg style="left:373px;top:239.5px" width="10" height="10" viewBox="0 0 10 10"><rect x=".5" y=".5" width="9" height="9" fill="#fff" stroke="#555" stroke-width=".9"/><path d="M2.2 5l2 2.5L8 1.8" stroke="#111" stroke-width="1.2" fill="none"/></svg>
<div class="a t b" style="left:415px;top:240px;font-size:8.65px">A1301020M00220071P0001</div>
<div class="a" style="left:371px;top:252px;width:8.5px;height:10px;background:rgba(170,170,170,0.51)"></div>
<div class="a" style="left:379.5px;top:252px;width:8.5px;height:10px;background:rgba(170,170,170,0.47)"></div>
<div class="a" style="left:371px;top:262px;width:8.5px;height:8px;background:rgba(200,190,170,0.25)"></div>
<div class="a" style="left:379.5px;top:262px;width:8.5px;height:8px;background:rgba(200,190,170,0.27)"></div>
<div class="a" style="left:414px;top:252px;width:8px;height:10px;background:rgba(130,120,210,0.86)"></div>
<div class="a" style="left:422px;top:252px;width:8px;height:10px;background:rgba(130,120,210,0.6)"></div>
<div class="a" style="left:430px;top:252px;width:8px;height:10px;background:rgba(130,120,210,0.8)"></div>
<div class="a" style="left:438px;top:252px;width:8px;height:10px;background:rgba(130,120,210,0.78)"></div>
<div class="a" style="left:446px;top:252px;width:8px;height:10px;background:rgba(130,120,210,0.6)"></div>
<div class="a" style="left:454px;top:252px;width:8px;height:10px;background:rgba(130,120,210,0.86)"></div>
<div class="a" style="left:462px;top:252px;width:2px;height:10px;background:rgba(130,120,210,0.89)"></div>
<div class="a" style="left:414px;top:262px;width:8px;height:8px;background:rgba(200,180,190,0.19)"></div>
<div class="a" style="left:422px;top:262px;width:8px;height:8px;background:rgba(200,180,190,0.34)"></div>
<div class="a" style="left:430px;top:262px;width:8px;height:8px;background:rgba(200,180,190,0.23)"></div>
<div class="a" style="left:438px;top:262px;width:8px;height:8px;background:rgba(200,180,190,0.25)"></div>
<div class="a" style="left:446px;top:262px;width:8px;height:8px;background:rgba(200,180,190,0.35)"></div>
<div class="a" style="left:454px;top:262px;width:8px;height:8px;background:rgba(200,180,190,0.32)"></div>
<div class="a" style="left:462px;top:262px;width:2px;height:8px;background:rgba(200,180,190,0.18)"></div>
<div class="a" style="left:575.5px;top:237.5px;width:8px;height:7.3px;background:rgba(180,175,240,0.4)"></div>
<div class="a" style="left:583.5px;top:237.5px;width:8px;height:7.3px;background:rgba(180,175,240,0.43)"></div>
<div class="a" style="left:591.5px;top:237.5px;width:8px;height:7.3px;background:rgba(180,175,240,0.37)"></div>
<div class="a" style="left:599.5px;top:237.5px;width:8px;height:7.3px;background:rgba(180,175,240,0.32)"></div>
<div class="a" style="left:607.5px;top:237.5px;width:0.5px;height:7.3px;background:rgba(180,175,240,0.36)"></div>
<div class="a" style="left:575.5px;top:244.8px;width:8px;height:7.2px;background:rgba(180,175,240,0.5)"></div>
<div class="a" style="left:583.5px;top:244.8px;width:8px;height:7.2px;background:rgba(180,175,240,0.26)"></div>
<div class="a" style="left:591.5px;top:244.8px;width:8px;height:7.2px;background:rgba(180,175,240,0.44)"></div>
<div class="a" style="left:599.5px;top:244.8px;width:8px;height:7.2px;background:rgba(180,175,240,0.4)"></div>
<div class="a" style="left:607.5px;top:244.8px;width:0.5px;height:7.2px;background:rgba(180,175,240,0.26)"></div>
<div class="a" style="left:575.5px;top:252px;width:8px;height:10px;background:rgba(130,120,200,0.7)"></div>
<div class="a" style="left:583.5px;top:252px;width:8px;height:10px;background:rgba(130,120,200,0.79)"></div>
<div class="a" style="left:591.5px;top:252px;width:8px;height:10px;background:rgba(130,120,200,0.75)"></div>
<div class="a" style="left:599.5px;top:252px;width:8px;height:10px;background:rgba(130,120,200,0.62)"></div>
<div class="a" style="left:607.5px;top:252px;width:8px;height:10px;background:rgba(130,120,200,0.9)"></div>
<div class="a" style="left:615.5px;top:252px;width:8px;height:10px;background:rgba(130,120,200,0.84)"></div>
<div class="a" style="left:623.5px;top:252px;width:0.5px;height:10px;background:rgba(130,120,200,0.89)"></div>
<div class="a" style="left:624px;top:252px;width:8px;height:10px;background:rgba(200,180,140,0.51)"></div>
<div class="a" style="left:575.5px;top:262px;width:8px;height:8px;background:rgba(200,180,190,0.2)"></div>
<div class="a" style="left:583.5px;top:262px;width:8px;height:8px;background:rgba(200,180,190,0.16)"></div>
<div class="a" style="left:591.5px;top:262px;width:8px;height:8px;background:rgba(200,180,190,0.31)"></div>
<div class="a" style="left:599.5px;top:262px;width:8px;height:8px;background:rgba(200,180,190,0.2)"></div>
<div class="a" style="left:607.5px;top:262px;width:8px;height:8px;background:rgba(200,180,190,0.18)"></div>
<div class="a" style="left:615.5px;top:262px;width:8px;height:8px;background:rgba(200,180,190,0.23)"></div>
<div class="a" style="left:623.5px;top:262px;width:0.5px;height:8px;background:rgba(200,180,190,0.33)"></div>
<div class="a" style="left:737.5px;top:237.5px;width:8.5px;height:14.5px;background:rgba(190,185,240,0.47)"></div>
<div class="a" style="left:737.5px;top:252px;width:8.5px;height:10px;background:rgba(190,170,150,0.58)"></div>
<div class="a" style="left:315px;top:286.5px;width:585px;height:17.5px;background:#dcdcdc;"></div>
<div class="a t " style="left:328.5px;top:291px;font-size:8.1px">属性</div>
<div class="a" style="left:354px;top:286.5px;width:65px;height:17.5px;background:#f4f4f4;border-radius:4px 4px 0 0"></div>
<div class="a t s" style="left:359.5px;top:291px;font-size:8.1px;letter-spacing:.3px"><span style="font-weight:400">&lt;BOM</span>特征码<span style="font-weight:400">&gt;</span></div>
<div class="a" style="left:314.5px;top:324px;width:584.5px;height:49px;background:#fff;border:1px solid #d2d2d2"></div>
<div class="a" style="left:315.5px;top:325px;width:570.5px;height:15.5px;background:#e3e3e3;"></div>
<div class="a" style="left:343px;top:325px;width:1px;height:15.5px;background:#f6f6f6;"></div>
<div class="a" style="left:555px;top:325px;width:1px;height:15.5px;background:#f6f6f6;"></div>
<div class="a" style="left:886px;top:325px;width:12px;height:15.5px;background:#ececec;"></div>
<div class="a t " style="left:229px;width:200px;text-align:center;top:328.5px;font-size:8.1px">序号</div>
<div class="a t " style="left:349.5px;width:200px;text-align:center;top:328.5px;font-size:8.1px">特征码</div>
<div class="a t " style="left:620.5px;width:200px;text-align:center;top:328.5px;font-size:8.1px">特征码说明</div>
<div class="a" style="left:315.5px;top:340.5px;width:570.5px;height:14.8px;background:#fdee9f;"></div>
<div class="a" style="left:315.5px;top:355.3px;width:570.5px;height:13.7px;background:#e8f0fd;"></div>
<div class="a t b" style="left:229.5px;width:200px;text-align:center;top:343.5px;font-size:9px;opacity:.6">1</div>
<div class="a t b" style="left:229.5px;width:200px;text-align:center;top:357.8px;font-size:9px">2</div>
<div class="a t b" style="left:344.5px;top:343.5px;font-size:9px;opacity:.75">B0101</div>
<div class="a t b" style="left:344.5px;top:357.8px;font-size:9px;opacity:.85">B0102</div>
<div class="a" style="left:886px;top:340.5px;width:12px;height:31.5px;background:#f4f4f4;"></div>
<svg style="left:889.5px;top:345px" width="6" height="4"><path d="M0 4h5.5l-2.75-4z" fill="#222"/></svg>
<svg style="left:889.5px;top:364px" width="6" height="4"><path d="M0 0h5.5l-2.75 4z" fill="#222"/></svg>
<div class="a" style="left:315px;top:376.5px;width:585px;height:17px;background:#dcdcdc;"></div>
<div class="a t " style="left:328px;top:381px;font-size:8.1px">属性</div>
<div class="a" style="left:353.5px;top:376.5px;width:112px;height:17px;background:#f4f4f4;border-radius:4px 4px 0 0"></div>
<svg style="left:359px;top:380px" width="11" height="11" viewBox="0 0 11 11"><path d="M.8 .3v3.4h3.4V.3" fill="none" stroke="#e02030" stroke-width="1.5"/><path d="M6.8 .3v3.4h3.4V.3" fill="none" stroke="#2878e0" stroke-width="1.5"/><rect x="0" y="6" width="5" height="5" fill="#28b428"/><rect x="6" y="6" width="5" height="5" fill="#f0c818"/><rect x="8.5" y="8" width="2.5" height="2" fill="#e02030"/><path d="M3 9.5L9.5 2" stroke="#222" stroke-width="1.1"/></svg>
<div class="a t " style="left:373px;top:381px;font-size:8.1px;letter-spacing:.35px">BOM自动配置模板明细</div>
<svg style="left:475px;top:380px" width="11" height="11" viewBox="0 0 11 11"><path d="M.8 .3v3.4h3.4V.3" fill="none" stroke="#e02030" stroke-width="1.5"/><path d="M6.8 .3v3.4h3.4V.3" fill="none" stroke="#2878e0" stroke-width="1.5"/><rect x="0" y="6" width="5" height="5" fill="#28b428"/><rect x="6" y="6" width="5" height="5" fill="#f0c818"/><rect x="8.5" y="8" width="2.5" height="2" fill="#e02030"/><path d="M3 9.5L9.5 2" stroke="#222" stroke-width="1.1"/></svg>
<div class="a t " style="left:488.5px;top:381px;font-size:8.1px">配方管理</div>
<svg style="left:537px;top:380px" width="9" height="11" viewBox="0 0 9 11"><path d="M.5 .5h5.5l2.5 2.5v7.5h-8z" fill="#fafafa" stroke="#999" stroke-width=".7"/><rect x="3" y="4" width="4.5" height="4" fill="#4a90e0"/></svg>
<div class="a t " style="left:550.5px;top:381px;font-size:8.1px">部分试配数据</div>
<svg style="left:318.5px;top:400px" width="9" height="10" viewBox="0 0 9 10"><rect x=".4" y=".4" width="8.2" height="9.2" fill="#f2f8ee" stroke="#6a9a5a" stroke-width=".7"/><path d="M2 2.5h1M4 2.5h3M2 5h1M4 5h3M2 7.5h1M4 7.5h3" stroke="#3a6a3a" stroke-width=".9"/></svg>
<svg style="left:329.5px;top:404px" width="5" height="3"><path d="M0 0h5l-2.5 3z" fill="#222"/></svg>
<svg style="left:341.5px;top:399.5px" width="10" height="11" viewBox="0 0 10 11"><path d="M.5 .5h5l2.5 2.5v7.5h-7.5z" fill="#fff" stroke="#4a7ab8" stroke-width=".8"/><path d="M6.3 3.2v6.4M3.1 6.4h6.4" stroke="#20b020" stroke-width="2.2"/></svg>
<div class="a t " style="left:353px;top:400.5px;font-size:8.1px">添加</div>
<svg style="left:378.5px;top:399.5px" width="8" height="11" viewBox="0 0 8 11"><path d="M.5 .5h4.5l2.5 2.5v7.5h-7z" fill="#aaa" stroke="#999" stroke-width=".6"/></svg>
<div class="a t g" style="left:389.5px;top:400.5px;font-size:8.1px">移去</div>
<div class="a t g" style="left:416.5px;top:400.5px;font-size:8.1px">输出关系</div>
<svg style="left:456.5px;top:399.5px" width="9" height="11" viewBox="0 0 9 11"><path d="M1 .5v10" stroke="#bbb" stroke-width="1" stroke-dasharray="1.5 1"/><rect x="3.5" y="1" width="4.5" height="3.5" fill="#888"/><rect x="3.5" y="6" width="4.5" height="4" fill="#aaa"/></svg>
<div class="a t g" style="left:467.5px;top:400.5px;font-size:8.1px">取消输出</div>
<div class="a" style="left:314.5px;top:415px;width:584.5px;height:59px;background:#fff;border:1px solid #d2d2d2"></div>
<div class="a" style="left:315.5px;top:415.5px;width:582.5px;height:14.5px;background:#e3e3e3;"></div>
<div class="a" style="left:343px;top:415.5px;width:1px;height:14.5px;background:#f6f6f6;"></div>
<div class="a" style="left:414px;top:415.5px;width:1px;height:14.5px;background:#f6f6f6;"></div>
<div class="a" style="left:554px;top:415.5px;width:1px;height:14.5px;background:#f6f6f6;"></div>
<div class="a" style="left:890px;top:415.5px;width:1px;height:14.5px;background:#f6f6f6;"></div>
<div class="a t " style="left:229px;width:200px;text-align:center;top:419px;font-size:8.1px">序号</div>
<div class="a t " style="left:274px;width:200px;text-align:center;top:419px;font-size:8.1px">顺序号</div>
<div class="a t " style="left:348px;width:200px;text-align:center;top:419px;font-size:8.1px">品号</div>
<div class="a t " style="left:419px;width:200px;text-align:center;top:419px;font-size:8.1px">品名</div>
<div class="a t " style="left:622.5px;width:200px;text-align:center;top:419px;font-size:8.1px">规格</div>
<div class="a" style="left:315.5px;top:430px;width:582.5px;height:15px;background:#fdee9f;"></div>
<div class="a" style="left:315.5px;top:445px;width:582.5px;height:13.5px;background:#e8f0fd;"></div>
<div class="a" style="left:890px;top:430.5px;width:8px;height:14.3px;background:#fbf6d8;"></div>
<div class="a" style="left:388px;top:430.5px;width:26px;height:14px;background:#fdf2c8;"></div>
<div class="a" style="left:414px;top:430.5px;width:8px;height:9px;background:rgba(248,170,110,0.41)"></div>
<div class="a" style="left:422px;top:430.5px;width:8px;height:9px;background:rgba(248,170,110,0.72)"></div>
<div class="a" style="left:430px;top:430.5px;width:8px;height:9px;background:rgba(248,170,110,0.58)"></div>
<div class="a" style="left:438px;top:430.5px;width:8px;height:9px;background:rgba(248,170,110,0.63)"></div>
<div class="a" style="left:446px;top:430.5px;width:8px;height:9px;background:rgba(248,170,110,0.39)"></div>
<div class="a" style="left:454px;top:430.5px;width:8px;height:9px;background:rgba(248,170,110,0.37)"></div>
<div class="a" style="left:462px;top:430.5px;width:8px;height:9px;background:rgba(248,170,110,0.63)"></div>
<div class="a" style="left:470px;top:430.5px;width:8px;height:9px;background:rgba(248,170,110,0.52)"></div>
<div class="a" style="left:478px;top:430.5px;width:8px;height:9px;background:rgba(248,170,110,0.38)"></div>
<div class="a" style="left:486px;top:430.5px;width:8px;height:9px;background:rgba(248,170,110,0.73)"></div>
<div class="a" style="left:494px;top:430.5px;width:8px;height:9px;background:rgba(248,170,110,0.6)"></div>
<div class="a" style="left:502px;top:430.5px;width:8px;height:9px;background:rgba(248,170,110,0.67)"></div>
<div class="a" style="left:510px;top:430.5px;width:8px;height:9px;background:rgba(248,170,110,0.38)"></div>
<div class="a" style="left:518px;top:430.5px;width:8px;height:9px;background:rgba(248,170,110,0.69)"></div>
<div class="a" style="left:526px;top:430.5px;width:8px;height:9px;background:rgba(248,170,110,0.38)"></div>
<div class="a" style="left:534px;top:430.5px;width:8px;height:9px;background:rgba(248,170,110,0.7)"></div>
<div class="a" style="left:542px;top:430.5px;width:8px;height:9px;background:rgba(248,170,110,0.53)"></div>
<div class="a" style="left:550px;top:430.5px;width:8px;height:9px;background:rgba(248,170,110,0.49)"></div>
<div class="a" style="left:558px;top:430.5px;width:8px;height:9px;background:rgba(248,170,110,0.57)"></div>
<div class="a" style="left:566px;top:430.5px;width:8px;height:9px;background:rgba(248,170,110,0.72)"></div>
<div class="a" style="left:574px;top:430.5px;width:8px;height:9px;background:rgba(248,170,110,0.46)"></div>
<div class="a" style="left:582px;top:430.5px;width:8px;height:9px;background:rgba(248,170,110,0.4)"></div>
<div class="a" style="left:590px;top:430.5px;width:8px;height:9px;background:rgba(248,170,110,0.56)"></div>
<div class="a" style="left:598px;top:430.5px;width:8px;height:9px;background:rgba(248,170,110,0.45)"></div>
<div class="a" style="left:606px;top:430.5px;width:8px;height:9px;background:rgba(248,170,110,0.39)"></div>
<div class="a" style="left:614px;top:430.5px;width:8px;height:9px;background:rgba(248,170,110,0.41)"></div>
<div class="a" style="left:622px;top:430.5px;width:8px;height:9px;background:rgba(248,170,110,0.37)"></div>
<div class="a" style="left:630px;top:430.5px;width:8px;height:9px;background:rgba(248,170,110,0.43)"></div>
<div class="a" style="left:638px;top:430.5px;width:8px;height:9px;background:rgba(248,170,110,0.47)"></div>
<div class="a" style="left:646px;top:430.5px;width:8px;height:9px;background:rgba(248,170,110,0.47)"></div>
<div class="a" style="left:654px;top:430.5px;width:8px;height:9px;background:rgba(248,170,110,0.65)"></div>
<div class="a" style="left:662px;top:430.5px;width:8px;height:9px;background:rgba(248,170,110,0.47)"></div>
<div class="a" style="left:670px;top:430.5px;width:8px;height:9px;background:rgba(248,170,110,0.55)"></div>
<div class="a" style="left:678px;top:430.5px;width:8px;height:9px;background:rgba(248,170,110,0.42)"></div>
<div class="a" style="left:686px;top:430.5px;width:8px;height:9px;background:rgba(248,170,110,0.49)"></div>
<div class="a" style="left:694px;top:430.5px;width:8px;height:9px;background:rgba(248,170,110,0.36)"></div>
<div class="a" style="left:702px;top:430.5px;width:8px;height:9px;background:rgba(248,170,110,0.45)"></div>
<div class="a" style="left:710px;top:430.5px;width:8px;height:9px;background:rgba(248,170,110,0.36)"></div>
<div class="a" style="left:718px;top:430.5px;width:8px;height:9px;background:rgba(248,170,110,0.64)"></div>
<div class="a" style="left:726px;top:430.5px;width:4px;height:9px;background:rgba(248,170,110,0.57)"></div>
<div class="a" style="left:414px;top:439.5px;width:8px;height:8px;background:rgba(245,200,120,0.31)"></div>
<div class="a" style="left:422px;top:439.5px;width:8px;height:8px;background:rgba(245,200,120,0.39)"></div>
<div class="a" style="left:430px;top:439.5px;width:8px;height:8px;background:rgba(245,200,120,0.53)"></div>
<div class="a" style="left:438px;top:439.5px;width:8px;height:8px;background:rgba(245,200,120,0.28)"></div>
<div class="a" style="left:446px;top:439.5px;width:8px;height:8px;background:rgba(245,200,120,0.5)"></div>
<div class="a" style="left:454px;top:439.5px;width:8px;height:8px;background:rgba(245,200,120,0.38)"></div>
<div class="a" style="left:462px;top:439.5px;width:8px;height:8px;background:rgba(245,200,120,0.4)"></div>
<div class="a" style="left:470px;top:439.5px;width:8px;height:8px;background:rgba(245,200,120,0.5)"></div>
<div class="a" style="left:478px;top:439.5px;width:8px;height:8px;background:rgba(245,200,120,0.37)"></div>
<div class="a" style="left:486px;top:439.5px;width:8px;height:8px;background:rgba(245,200,120,0.4)"></div>
<div class="a" style="left:494px;top:439.5px;width:8px;height:8px;background:rgba(245,200,120,0.46)"></div>
<div class="a" style="left:502px;top:439.5px;width:8px;height:8px;background:rgba(245,200,120,0.54)"></div>
<div class="a" style="left:510px;top:439.5px;width:8px;height:8px;background:rgba(245,200,120,0.35)"></div>
<div class="a" style="left:518px;top:439.5px;width:8px;height:8px;background:rgba(245,200,120,0.5)"></div>
<div class="a" style="left:526px;top:439.5px;width:8px;height:8px;background:rgba(245,200,120,0.46)"></div>
<div class="a" style="left:534px;top:439.5px;width:8px;height:8px;background:rgba(245,200,120,0.44)"></div>
<div class="a" style="left:542px;top:439.5px;width:8px;height:8px;background:rgba(245,200,120,0.37)"></div>
<div class="a" style="left:550px;top:439.5px;width:8px;height:8px;background:rgba(245,200,120,0.35)"></div>
<div class="a" style="left:558px;top:439.5px;width:8px;height:8px;background:rgba(245,200,120,0.27)"></div>
<div class="a" style="left:566px;top:439.5px;width:8px;height:8px;background:rgba(245,200,120,0.29)"></div>
<div class="a" style="left:574px;top:439.5px;width:8px;height:8px;background:rgba(245,200,120,0.27)"></div>
<div class="a" style="left:582px;top:439.5px;width:8px;height:8px;background:rgba(245,200,120,0.47)"></div>
<div class="a" style="left:590px;top:439.5px;width:8px;height:8px;background:rgba(245,200,120,0.33)"></div>
<div class="a" style="left:598px;top:439.5px;width:8px;height:8px;background:rgba(245,200,120,0.3)"></div>
<div class="a" style="left:606px;top:439.5px;width:8px;height:8px;background:rgba(245,200,120,0.28)"></div>
<div class="a" style="left:614px;top:439.5px;width:8px;height:8px;background:rgba(245,200,120,0.5)"></div>
<div class="a" style="left:622px;top:439.5px;width:8px;height:8px;background:rgba(245,200,120,0.51)"></div>
<div class="a" style="left:630px;top:439.5px;width:8px;height:8px;background:rgba(245,200,120,0.45)"></div>
<div class="a" style="left:638px;top:439.5px;width:8px;height:8px;background:rgba(245,200,120,0.33)"></div>
<div class="a" style="left:646px;top:439.5px;width:8px;height:8px;background:rgba(245,200,120,0.32)"></div>
<div class="a" style="left:654px;top:439.5px;width:8px;height:8px;background:rgba(245,200,120,0.34)"></div>
<div class="a" style="left:662px;top:439.5px;width:8px;height:8px;background:rgba(245,200,120,0.39)"></div>
<div class="a" style="left:670px;top:439.5px;width:8px;height:8px;background:rgba(245,200,120,0.3)"></div>
<div class="a" style="left:678px;top:439.5px;width:8px;height:8px;background:rgba(245,200,120,0.38)"></div>
<div class="a" style="left:686px;top:439.5px;width:8px;height:8px;background:rgba(245,200,120,0.33)"></div>
<div class="a" style="left:694px;top:439.5px;width:8px;height:8px;background:rgba(245,200,120,0.54)"></div>
<div class="a" style="left:702px;top:439.5px;width:8px;height:8px;background:rgba(245,200,120,0.54)"></div>
<div class="a" style="left:710px;top:439.5px;width:8px;height:8px;background:rgba(245,200,120,0.41)"></div>
<div class="a" style="left:718px;top:439.5px;width:8px;height:8px;background:rgba(245,200,120,0.32)"></div>
<div class="a" style="left:726px;top:439.5px;width:4px;height:8px;background:rgba(245,200,120,0.54)"></div>
<div class="a" style="left:414px;top:447.5px;width:8px;height:9px;background:rgba(150,150,250,0.44)"></div>
<div class="a" style="left:422px;top:447.5px;width:8px;height:9px;background:rgba(150,150,250,0.46)"></div>
<div class="a" style="left:430px;top:447.5px;width:8px;height:9px;background:rgba(150,150,250,0.3)"></div>
<div class="a" style="left:438px;top:447.5px;width:8px;height:9px;background:rgba(150,150,250,0.47)"></div>
<div class="a" style="left:446px;top:447.5px;width:8px;height:9px;background:rgba(150,150,250,0.51)"></div>
<div class="a" style="left:454px;top:447.5px;width:8px;height:9px;background:rgba(150,150,250,0.53)"></div>
<div class="a" style="left:462px;top:447.5px;width:8px;height:9px;background:rgba(150,150,250,0.39)"></div>
<div class="a" style="left:470px;top:447.5px;width:8px;height:9px;background:rgba(150,150,250,0.53)"></div>
<div class="a" style="left:478px;top:447.5px;width:8px;height:9px;background:rgba(150,150,250,0.3)"></div>
<div class="a" style="left:486px;top:447.5px;width:8px;height:9px;background:rgba(150,150,250,0.42)"></div>
<div class="a" style="left:494px;top:447.5px;width:8px;height:9px;background:rgba(150,150,250,0.34)"></div>
<div class="a" style="left:502px;top:447.5px;width:8px;height:9px;background:rgba(150,150,250,0.48)"></div>
<div class="a" style="left:510px;top:447.5px;width:8px;height:9px;background:rgba(150,150,250,0.32)"></div>
<div class="a" style="left:518px;top:447.5px;width:8px;height:9px;background:rgba(150,150,250,0.31)"></div>
<div class="a" style="left:526px;top:447.5px;width:8px;height:9px;background:rgba(150,150,250,0.44)"></div>
<div class="a" style="left:534px;top:447.5px;width:8px;height:9px;background:rgba(150,150,250,0.4)"></div>
<div class="a" style="left:542px;top:447.5px;width:8px;height:9px;background:rgba(150,150,250,0.56)"></div>
<div class="a" style="left:550px;top:447.5px;width:8px;height:9px;background:rgba(150,150,250,0.54)"></div>
<div class="a" style="left:558px;top:447.5px;width:8px;height:9px;background:rgba(150,150,250,0.64)"></div>
<div class="a" style="left:566px;top:447.5px;width:8px;height:9px;background:rgba(150,150,250,0.6)"></div>
<div class="a" style="left:574px;top:447.5px;width:8px;height:9px;background:rgba(150,150,250,0.62)"></div>
<div class="a" style="left:582px;top:447.5px;width:8px;height:9px;background:rgba(150,150,250,0.7)"></div>
<div class="a" style="left:590px;top:447.5px;width:8px;height:9px;background:rgba(150,150,250,0.48)"></div>
<div class="a" style="left:598px;top:447.5px;width:8px;height:9px;background:rgba(150,150,250,0.45)"></div>
<div class="a" style="left:606px;top:447.5px;width:8px;height:9px;background:rgba(150,150,250,0.74)"></div>
<div class="a" style="left:614px;top:447.5px;width:8px;height:9px;background:rgba(150,150,250,0.37)"></div>
<div class="a" style="left:622px;top:447.5px;width:8px;height:9px;background:rgba(150,150,250,0.63)"></div>
<div class="a" style="left:630px;top:447.5px;width:8px;height:9px;background:rgba(150,150,250,0.59)"></div>
<div class="a" style="left:638px;top:447.5px;width:8px;height:9px;background:rgba(150,150,250,0.32)"></div>
<div class="a" style="left:646px;top:447.5px;width:8px;height:9px;background:rgba(150,150,250,0.68)"></div>
<div class="a" style="left:654px;top:447.5px;width:8px;height:9px;background:rgba(150,150,250,0.7)"></div>
<div class="a" style="left:662px;top:447.5px;width:8px;height:9px;background:rgba(150,150,250,0.58)"></div>
<div class="a" style="left:670px;top:447.5px;width:8px;height:9px;background:rgba(150,150,250,0.63)"></div>
<div class="a" style="left:678px;top:447.5px;width:8px;height:9px;background:rgba(150,150,250,0.67)"></div>
<div class="a" style="left:686px;top:447.5px;width:6px;height:9px;background:rgba(150,150,250,0.36)"></div>
<div class="a" style="left:692px;top:447.5px;width:8px;height:9px;background:rgba(200,200,250,0.18)"></div>
<div class="a" style="left:700px;top:447.5px;width:8px;height:9px;background:rgba(200,200,250,0.18)"></div>
<div class="a" style="left:708px;top:447.5px;width:8px;height:9px;background:rgba(200,200,250,0.23)"></div>
<div class="a" style="left:716px;top:447.5px;width:8px;height:9px;background:rgba(200,200,250,0.22)"></div>
<div class="a" style="left:724px;top:447.5px;width:6px;height:9px;background:rgba(200,200,250,0.22)"></div>
<div class="a" style="left:729.5px;top:430.5px;width:160.5px;height:14.5px;background:transparent;border:1px solid #111"></div>
<div class="a" style="left:730.5px;top:431.5px;width:158.5px;height:12.5px;background:#fdee9f;"></div>
<div class="a t " style="left:229.5px;width:200px;text-align:center;top:433px;font-size:9px;color:#e02020;opacity:.8">1</div>
<div class="a t b" style="left:229.5px;width:200px;text-align:center;top:447.5px;font-size:9px">2</div>
<div class="a t " style="left:892px;top:433px;font-size:9px;color:#f01010;font-weight:bold">1</div>
<div class="a t b" style="left:892px;top:447.5px;font-size:9px;font-weight:bold">1</div>
<div class="a" style="left:315.5px;top:461.7px;width:582.5px;height:11.3px;background:#f2f2f2;"></div>
<div class="a" style="left:328px;top:462.2px;width:153px;height:10.3px;background:#d2d2d2;"></div>
<svg style="left:319.5px;top:464.5px" width="4" height="6"><path d="M4 0v5.5l-4-2.75z" fill="#222"/></svg>
<svg style="left:891.5px;top:464.5px" width="4" height="6"><path d="M0 0v5.5l4-2.75z" fill="#222"/></svg>
</body></html>
